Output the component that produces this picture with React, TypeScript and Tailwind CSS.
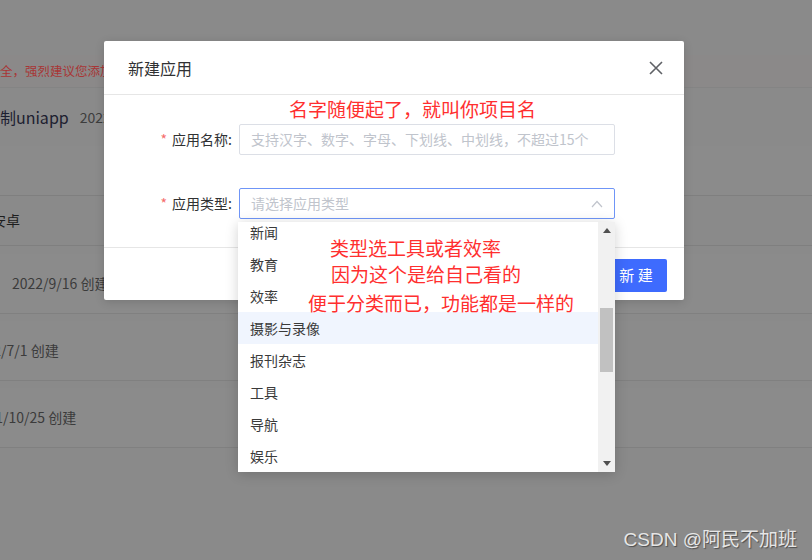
import React from 'react';

const items = ['新闻', '教育', '效率', '摄影与录像', '报刊杂志', '工具', '导航', '娱乐'];

function CloseIcon() {
  return (
    <svg width="14" height="14" viewBox="0 0 14 14" fill="none">
      <path d="M1 1L13 13M13 1L1 13" stroke="#5f6166" strokeWidth="1.6" />
    </svg>
  );
}

function ChevronUp() {
  return (
    <svg width="12" height="8" viewBox="0 0 12 8" fill="none">
      <path d="M1 7L6 1.5L11 7" stroke="#c0c4cc" strokeWidth="1.2" />
    </svg>
  );
}

export default function App() {
  return (
    <div className="relative w-[812px] h-[560px] overflow-hidden bg-[#8a8a8a] font-['Noto_Sans_CJK_SC','Noto_Sans',sans-serif]">
      {/* dimmed page behind the dialog */}
      <div className="flex flex-col">
        <div className="h-[55px]" />
        <div className="h-[33px] flex items-center border-b border-[#848484] bg-[#8b8989] text-[12.5px] text-[#a83636] whitespace-nowrap">
          全，强烈建议您添加以保证安全
        </div>
        <div className="h-[58px] flex items-center gap-[11px] whitespace-nowrap">
          <span className="text-[16px] text-[#1d2030]">制uniapp</span>
          <span className="text-[14px] text-[#3d3d3d]">2022/9/16</span>
        </div>
        <div className="h-[50px] bg-[#8b8b8b] border-b border-[#7f7f7f]" />
        <div className="h-[50px] flex items-center border-b border-[#7f7f7f] text-[14px] text-[#1e1e1e] ml-[-8px]">
          安卓
        </div>
        <div className="h-[8px]" />
        <div className="h-[60px] flex items-center border-b border-[#808080] bg-[#8b8b8b] text-[14px] text-[#3b3b3b] pl-[12px] whitespace-nowrap">
          2022/9/16 创建
        </div>
        <div className="h-[7px]" />
        <div className="h-[60px] flex items-center border-b border-[#808080] bg-[#8b8b8b] text-[14px] text-[#3b3b3b] ml-[-30px] whitespace-nowrap">
          2022/7/1 创建
        </div>
        <div className="h-[7px]" />
        <div className="h-[60px] flex items-center border-b border-[#808080] bg-[#8b8b8b] text-[14px] text-[#3b3b3b] ml-[-28px] whitespace-nowrap">
          2021/10/25 创建
        </div>
      </div>

      {/* dialog */}
      <div className="absolute left-[104px] top-[41px] w-[580px] h-[259px] bg-white rounded-[2px] shadow-[0_2px_10px_rgba(0,0,0,0.15)] flex flex-col">
        <div className="h-[54px] flex items-center justify-between pl-[24px] pr-[21px] border-b border-[#e6e6e6]">
          <span className="text-[16px] text-[#303133]">新建应用</span>
          <CloseIcon />
        </div>
        <div className="h-[152px] flex flex-col">
          <div className="h-[27px] pl-[185px] text-[19px] leading-[27px] text-[#ff2f2f] whitespace-nowrap">名字随便起了，就叫你项目名</div>
          <div className="mt-[2px] flex items-center">
            <div className="w-[135px] flex justify-end items-center pr-[7px] text-[14px] text-[#303133] whitespace-nowrap">
              <span className="text-[#f56c6c] mr-[5px]">*</span>应用名称:
            </div>
            <div className="w-[376px] h-[31px] border border-[#dcdfe6] rounded-[2px] flex items-center pl-[11px] text-[14px] text-[#c0c4cc] whitespace-nowrap">
              支持汉字、数字、字母、下划线、中划线，不超过15个
            </div>
          </div>
          <div className="mt-[33px] flex items-center">
            <div className="w-[135px] flex justify-end items-center pr-[7px] text-[14px] text-[#303133] whitespace-nowrap">
              <span className="text-[#f56c6c] mr-[5px]">*</span>应用类型:
            </div>
            <div className="w-[376px] h-[31px] border border-[#6f95f7] rounded-[2px] flex items-center justify-between pl-[11px] pr-[11px] text-[14px] text-[#c0c4cc]">
              <span>请选择应用类型</span>
              <ChevronUp />
            </div>
          </div>
        </div>
        <div className="flex-1 border-t border-[#e6e6e6] flex justify-end items-start pt-[11px] pr-[17px]">
          <div className="w-[62px] h-[33px] bg-[#3e6bfe] rounded-[2px] flex items-center justify-center text-[15px] text-white whitespace-pre">
            新 建
          </div>
        </div>
      </div>

      {/* dropdown */}
      <div className="absolute left-[238px] top-[222px] w-[377px] h-[250px] bg-white shadow-[0_2px_12px_rgba(0,0,0,0.18)] flex overflow-hidden">
        <div className="flex-1 overflow-hidden">
          <div className="mt-[-6px] flex flex-col">
            {items.map((it) => (
              <div
                key={it}
                className={`h-[32px] flex items-center pl-[12px] text-[14px] text-[#3a3a3a] ${it === '摄影与录像' ? 'bg-[#f0f5fe]' : ''}`}
              >
                {it}
              </div>
            ))}
          </div>
        </div>
        <div className="w-[17px] bg-[#f1f1f1] flex flex-col items-center">
          <div className="h-[17px] flex items-center justify-center">
            <svg width="8" height="5" viewBox="0 0 8 5"><path d="M0 5L4 0L8 5Z" fill="#505050" /></svg>
          </div>
          <div className="h-[69px]" />
          <div className="w-[13px] h-[64px] bg-[#c1c1c1]" />
          <div className="flex-1" />
          <div className="h-[17px] flex items-center justify-center">
            <svg width="8" height="5" viewBox="0 0 8 5"><path d="M0 0L8 0L4 5Z" fill="#505050" /></svg>
          </div>
        </div>
        <div className="absolute left-[92px] top-[14px] text-[19px] leading-[24px] text-[#ff2f2f] whitespace-nowrap">类型选工具或者效率</div>
        <div className="absolute left-[93px] top-[40px] text-[19px] leading-[24px] text-[#ff2f2f] whitespace-nowrap">因为这个是给自己看的</div>
        <div className="absolute left-[70px] top-[69px] text-[19px] leading-[24px] text-[#ff2f2f] whitespace-nowrap">便于分类而已，功能都是一样的</div>
      </div>

      {/* watermark */}
      <div className="absolute right-[15px] bottom-[8px] text-[19px] leading-[24px] text-[#e6e6e6] font-['Liberation_Sans','Noto_Sans_CJK_SC',sans-serif] [text-shadow:1px_1px_1px_rgba(0,0,0,0.45)] whitespace-nowrap">
        CSDN @阿民不加班
      </div>
    </div>
  );
}
